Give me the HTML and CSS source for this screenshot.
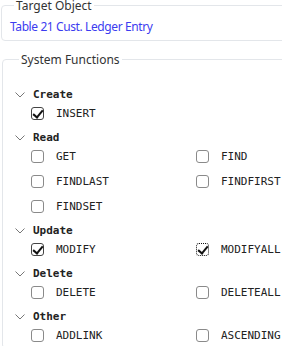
FILE: index.html
```html
<!DOCTYPE html>
<html lang="en">
<head>
  <meta charset="UTF-8">
  <meta name="viewport" content="width=device-width, initial-scale=1.0">
  <title>Permissions</title>
  <link rel="stylesheet" href="styles.css">
</head>
<body>
  <div class="page">
    <fieldset class="box target">
      <legend>Target Object</legend>
      <div class="target-name">Table 21 Cust. Ledger Entry</div>
    </fieldset>

    <fieldset class="box functions">
      <legend>System Functions</legend>

      <div class="group">
        <div class="group-title">
          <svg class="chevron" width="10" height="6" viewBox="0 0 10 6"><polyline points="0.5,0.5 5,5 9.5,0.5" fill="none" stroke="#777" stroke-width="1"/></svg>
          <span>Create</span>
        </div>
        <div class="items">
          <label class="item"><span class="check on"></span>INSERT</label>
        </div>
      </div>

      <div class="group">
        <div class="group-title">
          <svg class="chevron" width="10" height="6" viewBox="0 0 10 6"><polyline points="0.5,0.5 5,5 9.5,0.5" fill="none" stroke="#777" stroke-width="1"/></svg>
          <span>Read</span>
        </div>
        <div class="items">
          <label class="item"><span class="check"></span>GET</label>
          <label class="item"><span class="check"></span>FIND</label>
          <label class="item"><span class="check"></span>FINDLAST</label>
          <label class="item"><span class="check"></span>FINDFIRST</label>
          <label class="item"><span class="check"></span>FINDSET</label>
        </div>
      </div>

      <div class="group">
        <div class="group-title">
          <svg class="chevron" width="10" height="6" viewBox="0 0 10 6"><polyline points="0.5,0.5 5,5 9.5,0.5" fill="none" stroke="#777" stroke-width="1"/></svg>
          <span>Update</span>
        </div>
        <div class="items">
          <label class="item"><span class="check on"></span>MODIFY</label>
          <label class="item"><span class="check on focus"></span>MODIFYALL</label>
        </div>
      </div>

      <div class="group">
        <div class="group-title">
          <svg class="chevron" width="10" height="6" viewBox="0 0 10 6"><polyline points="0.5,0.5 5,5 9.5,0.5" fill="none" stroke="#777" stroke-width="1"/></svg>
          <span>Delete</span>
        </div>
        <div class="items">
          <label class="item"><span class="check"></span>DELETE</label>
          <label class="item"><span class="check"></span>DELETEALL</label>
        </div>
      </div>

      <div class="group">
        <div class="group-title">
          <svg class="chevron" width="10" height="6" viewBox="0 0 10 6"><polyline points="0.5,0.5 5,5 9.5,0.5" fill="none" stroke="#777" stroke-width="1"/></svg>
          <span>Other</span>
        </div>
        <div class="items">
          <label class="item"><span class="check"></span>ADDLINK</label>
          <label class="item"><span class="check"></span>ASCENDING</label>
        </div>
      </div>
    </fieldset>
  </div>
</body>
</html>
```

FILE: styles.css
```css
body {
  margin: 0;
  overflow: hidden;
  background-color: #fff;
  color: #333;
  font-family: "Noto Sans", sans-serif;
  font-size: 12px;
}

.page {
  width: 420px;
  padding-left: 1px;
}

.box {
  margin: 0;
  border: 1px solid #e3e6ea;
  border-radius: 4px;
}

.box legend {
  padding: 0 2px;
  margin-left: 4px;
  line-height: 11px;
  color: #333;
}

.target {
  padding: 8px 8px 5px;
}

.target-name {
  line-height: 16px;
  letter-spacing: -0.4px;
  color: #3c3cf0;
}

.functions {
  margin-top: 13px;
  margin-left: 1px;
  padding: 23px 0 0 12px;
}

.group + .group {
  margin-top: 5px;
}

.group-title {
  display: flex;
  align-items: center;
  height: 13px;
  font-family: "DejaVu Sans Mono", monospace;
  font-size: 11px;
  font-weight: bold;
  color: #222;
}

.chevron {
  margin-right: 8px;
}

.items {
  display: grid;
  grid-template-columns: 165px 165px;
  padding-left: 16px;
}

.item {
  display: flex;
  align-items: center;
  height: 25px;
  font-family: "DejaVu Sans Mono", monospace;
  font-size: 11px;
  color: #222;
}

.check {
  box-sizing: border-box;
  width: 13px;
  height: 13px;
  margin-right: 12px;
  border: 1px solid #8a8a8a;
  border-radius: 3px;
  background-color: #fff;
  position: relative;
}

.check.on {
  border-color: #444;
}

.check.on::after {
  content: "";
  position: absolute;
  left: 3px;
  top: 0px;
  width: 4px;
  height: 8px;
  border-right: 2px solid #111;
  border-bottom: 2px solid #111;
  transform: rotate(40deg);
}

.check.focus {
  border: 1px dotted #111;
}
```
